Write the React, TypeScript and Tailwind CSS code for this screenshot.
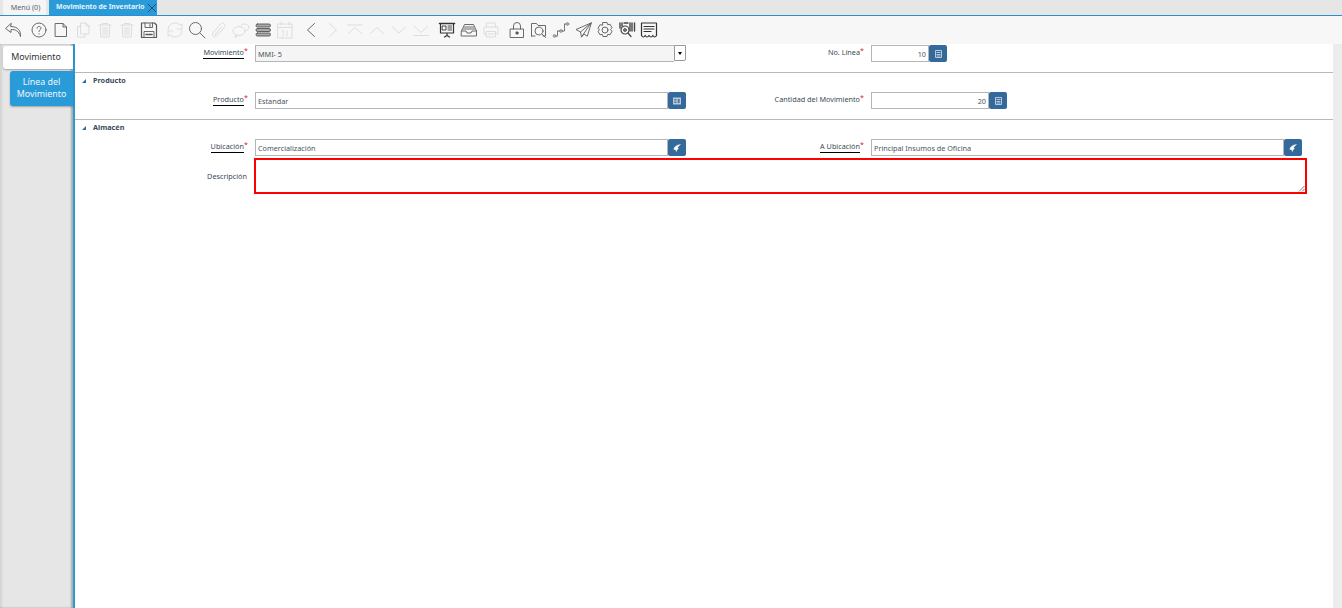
import type { ReactNode } from "react"

const font = "font-['Noto_Sans','Open_Sans',sans-serif]"

const Ico = ({ children, off, gap }: { children: ReactNode; off?: boolean; gap?: boolean }) => (
  <div className={`w-[22px] h-[22px] flex items-center justify-center ${gap ? "ml-[4px]" : ""}`}>
    <svg
      width="20"
      height="20"
      viewBox="0 0 20 20"
      fill="none"
      stroke={off ? "#d9d9d9" : "#5a5a5a"}
      strokeWidth="0.9"
      strokeLinecap="round"
      strokeLinejoin="round"
    >
      {children}
    </svg>
  </div>
)

const Trash = () => (
  <>
    <path d="M4 5h12M7.500 5V3.500h5V5M5.200 5l.7 12h8.200l.7-12" />
    <path d="M8 7.500v7.500M10 7.500v7.500M12 7.500v7.500" />
  </>
)

const Toolbar = () => (
  <div className="h-[28px] bg-[#f7f7f7] flex items-center pl-[2px]">
    <Ico>
      <path d="M8 3.500 2.500 8.500l5.500 4V9.500c4-.3 8 1.500 9.500 7 .5-5.500-2.500-10-9.500-10z" />
    </Ico>
    <Ico gap>
      <circle cx="10" cy="10" r="7" />
      <path d="M8 8.200c.2-2.400 4-2.400 4 0 0 1.500-2 1.500-2 3.300M10 13.700v.3" />
    </Ico>
    <Ico>
      <path d="M4.500 3.500h7.500l3.500 3.500v9.500h-11zM12 3.500V7h3.500" />
    </Ico>
    <Ico off>
      <path d="M8 3h5l3 3v8H8zM13 3v3h3M8 6.500H4.500v10.500H12v-3" />
    </Ico>
    <Ico off>
      <Trash />
    </Ico>
    <Ico off>
      <Trash />
    </Ico>
    <Ico>
      <path d="M2.500 3h13l2 2v12.500h-15z" strokeWidth="1.200" />
      <path d="M6 3v4.500h7.500V3M11 4v2.500M5 17.500v-6h10v6" />
      <path d="M7 14.500h6" strokeWidth="1.600" />
    </Ico>
    <Ico off gap>
      <path d="M3 10a7 7 0 0 1 12-5l2-1v5h-5M17 10a7 7 0 0 1-12 5l-2 1v-5h5" />
    </Ico>
    <Ico>
      <circle cx="8.500" cy="8.500" r="6" />
      <path d="m13 13 5 5" />
    </Ico>
    <Ico off>
      <path d="M6 17.500c-2.500-1-3-3.500-1.500-5.500l7-8c2.500-2.500 6 .5 3.500 3.500l-7 8c-1 1-2.500 0-1.500-1.500l6-7" />
    </Ico>
    <Ico off>
      <ellipse cx="8" cy="11" rx="6" ry="4.500" />
      <path d="M10 5c1.500-1.800 7.500-1.500 8 2 .2 1.500-1 3-3 3.500M5 15l-1 2.500 3-1.800" />
    </Ico>
    <Ico>
      <rect x="3" y="4" width="14.500" height="3" rx="1.500" fill="#aaa" stroke="#555" />
      <rect x="3" y="8.500" width="14.500" height="3" rx="1.500" fill="#aaa" stroke="#555" />
      <rect x="3" y="13" width="14.500" height="3" rx="1.500" fill="#aaa" stroke="#555" />
    </Ico>
    <Ico off>
      <path d="M3 4h14v14H3zM3 7.500h14M6 2v3M14 2v3M7 11h2l-1 2c1 0 1.500 3-1 3M12 11v5" />
    </Ico>
    <Ico gap>
      <path d="m13.500 3.500-7 6.500 7 6.500" />
    </Ico>
    <Ico off>
      <path d="m6.500 3.500 7 6.500-7 6.500" />
    </Ico>
    <Ico off>
      <path d="M2.500 5h15M3.500 13.500 10 7.500l6.500 6" />
    </Ico>
    <Ico off>
      <path d="M3.500 13.500 10 7.500l6.500 6" />
    </Ico>
    <Ico off>
      <path d="M3.500 7 10 13l6.500-6" />
    </Ico>
    <Ico off>
      <path d="M3.500 6.500 10 12.500l6.500-6M2.500 15.500h15" />
    </Ico>
    <Ico gap>
      <path d="M2.500 3.500h15" strokeWidth="1.600" stroke="#333" />
      <path d="M3.500 3.500h13V13h-13zM10 13v2.500M7.500 17l2.500-1.500 2.500 1.500" strokeWidth="1.200" stroke="#333" />
      <path d="M5.500 6h3.500v4H5.500zM11 6h3.500M11 8h3.500M11 10h3.500" stroke="#333" />
    </Ico>
    <Ico>
      <path d="M2.500 11 5.500 4.500h9l3 6.500v5h-15zM2.500 11H7l1 2h4l1-2h4.500M5.500 7h9M4.500 9h11" />
    </Ico>
    <Ico off>
      <path d="M5.500 7V3h9v4M5.500 14H3V7h14v7h-2.500M5.500 11.500h9v5.500h-9zM7.500 14h5" />
    </Ico>
    <Ico gap>
      <path d="M6.500 9V6a3.500 3.500 0 0 1 7 0v3" />
      <path d="M3.500 9h13v8.500h-13z" />
      <circle cx="10" cy="13" r="1.200" fill="#5a5a5a" />
    </Ico>
    <Ico>
      <path d="M2.500 16V3.500h5l1.500 2h7.500V16H14M2.500 16H6" />
      <circle cx="10" cy="11" r="4" />
      <path d="m13 14 3.500 3.500" />
    </Ico>
    <Ico>
      <circle cx="3.500" cy="16" r="1.400" fill="#aaa" stroke="#999" />
      <circle cx="10" cy="11" r="1.400" fill="#aaa" stroke="#999" />
      <circle cx="16.500" cy="4" r="1.400" fill="#aaa" stroke="#999" />
      <path d="M5 16h1.500v-5H8.500M11.500 11h2V4H15" strokeDasharray="1.500 1" />
    </Ico>
    <Ico>
      <path d="M18 3 3 9.500l4.500 2.500 1 5 2.500-3 3 2zM18 3 7.500 12M18 3 8.500 17" />
    </Ico>
    <Ico>
      <path d="m8 2.500h4l.7 2.200 2.300-.5 2 3.500-1.500 1.800 1.500 1.800-2 3.500-2.300-.5-.7 2.200H8l-.7-2.200-2.300.5-2-3.500L4.500 10 3 8.200l2-3.500 2.300.5z" />
      <circle cx="10" cy="10" r="3" />
    </Ico>
    <Ico>
      <path d="M3 3v5M5 3v3M13 3v8M15 3v8M17.500 3v8" strokeWidth="1.400" stroke="#444" />
      <path d="M7 3h4" strokeWidth="1.400" stroke="#444" />
      <circle cx="8" cy="10" r="4" strokeWidth="1.200" stroke="#444" />
      <circle cx="8" cy="10" r="1.500" fill="#777" />
      <path d="m11 13 3 3.500" strokeWidth="1.200" stroke="#444" />
    </Ico>
    <Ico>
      <path d="M2.500 3h15v12.500c-1.200 2-2.500 2-3.700 0-1.200 2-2.400 2-3.800 0-1.300 2-2.600 2-3.800 0-1.200 2-2.500 2-3.700 0z" strokeWidth="1.200" stroke="#333" />
      <path d="M5 6.500h10M5 9h10M5 11.500h7" strokeWidth="1.200" stroke="#333" />
    </Ico>
  </div>
)

const Label = ({ text, link, w }: { text: string; link?: boolean; w: string }) => (
  <div className={`${w} shrink-0 flex justify-end items-start pr-[8px] text-[7.25px] leading-[11px] text-[#3c4a5a] pt-[2px]`}>
    <span className={link ? "border-b border-black leading-[10px] pb-[1px]" : ""}>{text}</span>
    <span className="text-[#e02020] text-[7px] leading-[7px] w-[3px]">*</span>
  </div>
)

const FieldBtn = ({ children }: { children: ReactNode }) => (
  <div className="w-[18px] h-[17px] bg-[#33699b] rounded-[2px] flex items-center justify-center shrink-0">
    {children}
  </div>
)

const Calc = () => (
  <svg width="7" height="8" viewBox="0 0 7 8" fill="none" stroke="#b9cbdb" strokeWidth="1">
    <path d="M.5.5h6v7h-6zM1.500 2.500h4M1.500 4.500h4M1.500 6h4" />
  </svg>
)

const Bolt = () => (
  <svg width="8" height="8" viewBox="0 0 8 8" fill="#fff" stroke="#fff" strokeWidth="0.4">
    <path d="M7.500.5C4.500.7 1 2.500.8 5.500h1.900L3.200 7.500C4 6.500 4.200 5 5.500 4.500L4.500 3.500C5.300 2.500 6.500 1.500 7.500.5z" />
  </svg>
)

const Prod = () => (
  <svg width="8" height="8" viewBox="0 0 8 8" fill="#b9cbdb">
    <path d="M0 .5h8v7H0z" />
    <path d="M1.200 2h2.300v1.500H1.200zM4.700 2h2v4h-2zM1.200 4.500h2.300V6H1.200z" fill="#4d7ca6" />
  </svg>
)

const Input = ({ value, right, w }: { value: string; right?: boolean; w: string }) => (
  <div
    className={`h-[17px] border border-[#b5b5b5] bg-white text-[7.25px] leading-[16px] px-[2px] text-[#4a5560] whitespace-nowrap overflow-hidden ${w} ${right ? "text-right" : ""}`}
  >
    {value}
  </div>
)

const Section = ({ title }: { title: string }) => (
  <div className="h-[20px] border-t border-[#b8b8b8] flex items-center pl-[7px] pb-[3px]">
    <svg width="4" height="4" viewBox="0 0 4 4" className="fill-[#33699b]">
      <path d="M4 0v4H0z" />
    </svg>
    <span className="ml-[7px] text-[7.25px] font-bold text-[#3c4a5a] leading-none">{title}</span>
  </div>
)

const Row = ({ children }: { children: ReactNode }) => <div className="h-[17px] flex">{children}</div>

export default function App() {
  return (
    <div className={`${font} w-[1342px] h-[608px] bg-white overflow-hidden flex flex-col`}>
      {/* Tabs */}
      <div className="h-[16px] shrink-0 bg-[#e6e6e6] border-b border-[#2a8fd0] flex pl-[3px]">
        <div className="w-[43px] h-[15px] bg-[#f5f5f5] text-[7.2px] leading-[15px] text-[#5a6570] text-center pl-[2px]">Menú (0)</div>
        <div className="ml-[3px] w-[108px] h-[15px] bg-[#2a9bd9] flex items-center pl-[7px]">
          <span className="text-[6.8px] font-bold text-[#e8f4fb] leading-none whitespace-nowrap">Movimiento de Inventario</span>
          <svg width="10" height="10" viewBox="0 0 10 10" className="ml-auto shrink-0" stroke="#1c4e78" strokeWidth="1" fill="none">
            <path d="m1 1 8 8M9 1 1 9" />
          </svg>
        </div>
      </div>

      <Toolbar />

      <div className="flex flex-1 min-h-0">
        {/* Side tabs */}
        <div className="w-[75px] shrink-0 bg-[#e6e6e6] border-r-[2px] border-[#2a9bd9] pt-[2px] flex flex-col items-end shadow-[inset_-2px_0_2px_rgba(0,0,0,0.25),inset_2px_0_2px_rgba(0,0,0,0.08)]">
          <div className="w-[70px] h-[23px] bg-white rounded-l-[3px] text-[8.9px] leading-[22px] text-[#333] text-center pr-[4px] shadow-[0_1px_2px_rgba(0,0,0,0.3)] z-10">
            Movimiento
          </div>
          <div className="mt-[2px] w-[63px] h-[35px] bg-[#2a9bd9] rounded-l-[3px] text-[8.9px] leading-[12px] text-[#eef7fc] text-center pt-[5px] shadow-[0_1px_2px_rgba(0,0,0,0.3)] z-10">
            Línea del Movimiento
          </div>
        </div>

        {/* Form */}
        <div className="flex-1 min-w-0 pt-[1px]">
          <Row>
            <Label text="Movimiento" link w="w-[180px]" />
            <div className="w-[419px] h-[17px] border border-[#b5b5b5] border-r-0 bg-[#f5f5f5] text-[7.25px] leading-[16px] text-[#4a5560] pl-[2px]">
              MMI- 5
            </div>
            <div className="w-[12px] h-[16px] bg-white border border-[#999] rounded-br-[2px] flex items-center justify-center">
              <div className="border-x-[2.5px] border-x-transparent border-t-[3px] border-t-black" />
            </div>
            <Label text="No. Línea" w="w-[185px]" />
            <Input value="10" right w="w-[58px]" />
            <FieldBtn><Calc /></FieldBtn>
          </Row>
          <div className="mt-[10px]"><Section title="Producto" /></div>
          <Row>
            <Label text="Producto" link w="w-[180px]" />
            <Input value="Estandar" w="w-[413px]" />
            <FieldBtn><Prod /></FieldBtn>
            <Label text="Cantidad del Movimiento" w="w-[185px]" />
            <Input value="20" right w="w-[118px]" />
            <FieldBtn><Calc /></FieldBtn>
          </Row>
          <div className="mt-[10px]"><Section title="Almacén" /></div>
          <Row>
            <Label text="Ubicación" link w="w-[180px]" />
            <Input value="Comercialización" w="w-[413px]" />
            <FieldBtn><Bolt /></FieldBtn>
            <Label text="A Ubicación" link w="w-[185px]" />
            <Input value="Principal Insumos de Oficina" w="w-[413px]" />
            <FieldBtn><Bolt /></FieldBtn>
          </Row>
          <div className="flex mt-[2px]">
            <div className="w-[179px] shrink-0 flex items-center justify-end pr-[7px] text-[7.25px] text-[#3c4a5a] pt-[1px]">Descripción</div>
            <div className="w-[1053px] h-[36px] border-[2px] border-[#ff0000] bg-white relative">
              <svg width="7" height="7" viewBox="0 0 7 7" className="absolute right-0 bottom-0" stroke="#555" strokeWidth="0.8">
                <path d="M6.500 1 1 6.500M6.500 4 4 6.500" />
              </svg>
            </div>
          </div>
        </div>
        <div className="w-[9px] shrink-0 bg-[#ececec]" />
      </div>
    </div>
  )
}
